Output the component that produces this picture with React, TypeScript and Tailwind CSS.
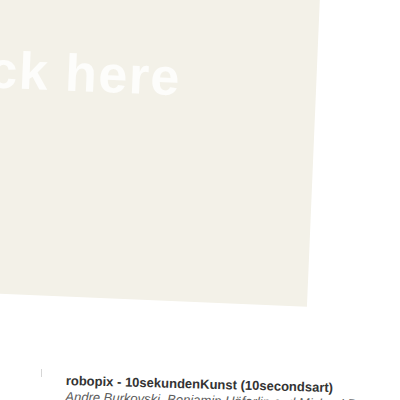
export default function App() {
  return (
    <div className="w-[400px] h-[400px] overflow-hidden bg-white font-['Liberation_Sans',Arial,sans-serif]">
      {/* tilted artwork card */}
      <div className="ml-[-180px] mt-[-5px] w-[500px] h-[312px] bg-[#f3f1e8] origin-top-right rotate-[2.4deg]">
        <div className="pl-[101px] pt-[62px] text-[52px] leading-none font-bold tracking-[1.5px] text-[#fdfdfb] whitespace-nowrap">
          Click here
        </div>
      </div>

      {/* caption */}
      <div className="mt-[66px] flex items-start pl-[41px]">
        <span className="mt-[-4px] w-px h-[8px] bg-[#d6d6d6]" />
        <div className="ml-[24px] origin-top-left rotate-[1.5deg] text-[13px] leading-[16px] whitespace-nowrap">
          <div className="font-bold text-[#333333]">robopix - 10sekundenKunst (10secondsart)</div>
          <div className="italic text-[#5a5a5a]">Andre Burkovski, Benjamin Höferlin and Michael Raschke</div>
        </div>
      </div>
    </div>
  )
}
